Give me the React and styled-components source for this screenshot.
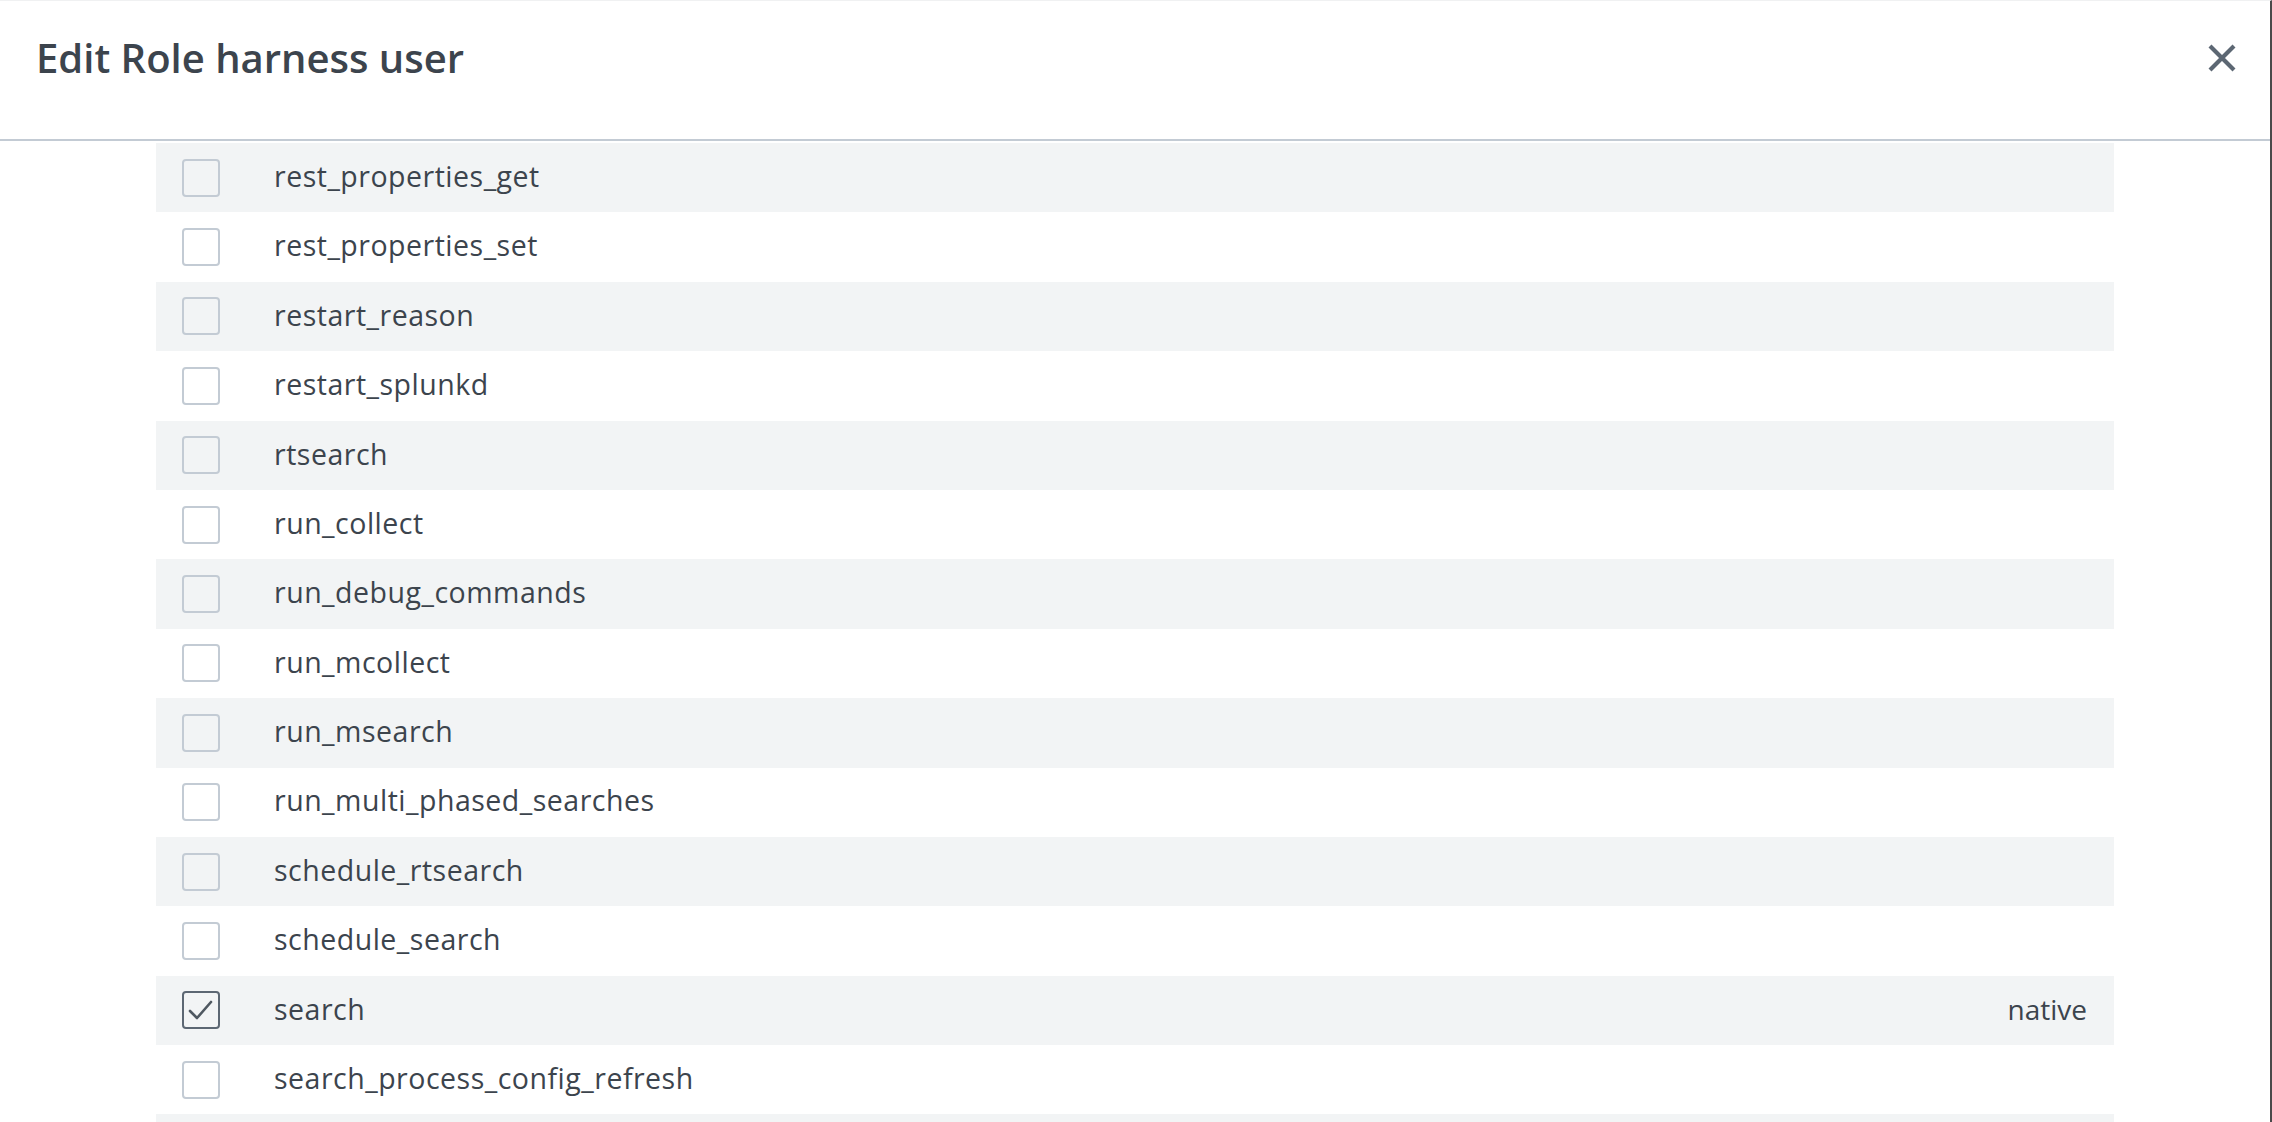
import React from 'react'
import styled, { createGlobalStyle } from 'styled-components'

const GlobalStyle = createGlobalStyle`
  html, body {
    margin: 0;
    padding: 0;
    background: #ffffff;
    overflow: hidden;
  }
  body {
    font-family: "Open Sans", "Liberation Sans", sans-serif;
    color: #3c444d;
  }
`

// the last entry is only peeking in at the bottom edge, its label is below the fold
const capabilities = [
  { name: 'rest_properties_get' },
  { name: 'rest_properties_set' },
  { name: 'restart_reason' },
  { name: 'restart_splunkd' },
  { name: 'rtsearch' },
  { name: 'run_collect' },
  { name: 'run_debug_commands' },
  { name: 'run_mcollect' },
  { name: 'run_msearch' },
  { name: 'run_multi_phased_searches' },
  { name: 'schedule_rtsearch' },
  { name: 'schedule_search' },
  { name: 'search', checked: true, source: 'native' },
  { name: 'search_process_config_refresh' },
  { name: '' },
]

const App = () => {
  return (
    <>
      <GlobalStyle />
      <Modal>
        <Header>
          <Title>Edit Role harness user</Title>
          <CloseButton aria-label="Close">
            <svg width="28" height="28" viewBox="0 0 28 28">
              <path d="M2 2 L26 26 M26 2 L2 26" stroke="#5c6773" strokeWidth="4.2" />
            </svg>
          </CloseButton>
        </Header>
        <Body>
          <List>
            {capabilities.map((cap, i) => (
              <Row key={i} $striped={i % 2 === 0}>
                {cap.name && (
                  <>
                    <Checkbox $checked={cap.checked}>
                      {cap.checked && (
                        <svg width="34" height="34" viewBox="0 0 34 34">
                          <path d="M6 18 L13 25 L27 9" fill="none" stroke="#4f5861" strokeWidth="2.6" strokeLinecap="round" strokeLinejoin="round" />
                        </svg>
                      )}
                    </Checkbox>
                    <Name>{cap.name}</Name>
                    {cap.source && <Source>{cap.source}</Source>}
                  </>
                )}
              </Row>
            ))}
          </List>
        </Body>
      </Modal>
    </>
  )
}

const Modal = styled.div`
  height: 1122px;
  box-sizing: border-box;
  border-top: 1px solid #f0f1f2;
  border-right: 2px solid #4a4a4a;
  display: flex;
  flex-direction: column;
  overflow: hidden;
`

const Header = styled.header`
  height: 140px;
  box-sizing: border-box;
  flex-shrink: 0;
  display: flex;
  align-items: center;
  justify-content: space-between;
  padding: 0 34px 25px 36px;
  border-bottom: 2px solid #c3cbd4;
`

const Title = styled.h1`
  margin: 0;
  font-size: 40px;
  font-weight: 600;
  color: #3c444d;
`

const CloseButton = styled.button`
  border: none;
  background: none;
  padding: 0;
  display: flex;
  cursor: pointer;
`

const Body = styled.div`
  padding: 2px 156px 0 156px;
`

const List = styled.div`
  display: flex;
  flex-direction: column;
`

const Row = styled.div`
  height: 69.4px;
  flex-shrink: 0;
  display: flex;
  align-items: center;
  padding: 0 27px 0 26px;
  background: ${p => (p.$striped ? '#f2f4f5' : '#ffffff')};
`

const Checkbox = styled.span`
  width: 38px;
  height: 38px;
  box-sizing: border-box;
  border: 2px solid ${p => (p.$checked ? '#5c6773' : '#c3cbd4')};
  border-radius: 4px;
  display: flex;
  align-items: center;
  justify-content: center;
  flex-shrink: 0;
  margin-right: 54px;
`

const Name = styled.span`
  font-size: 28.5px;
  letter-spacing: 0.5px;
  line-height: 1;
  padding-bottom: 3px;
  color: #3c444d;
  flex: 1;
`

const Source = styled.span`
  font-size: 28px;
  line-height: 1;
  padding-bottom: 3px;
  color: #3c444d;
`

export default App
